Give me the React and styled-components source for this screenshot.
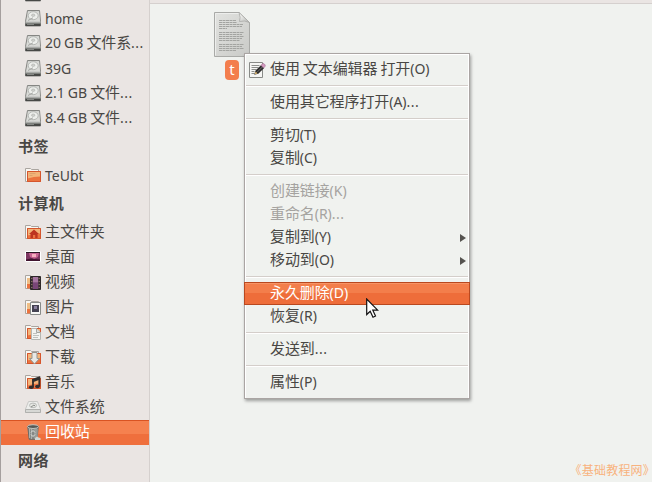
import React from "react";
import styled, { createGlobalStyle, css } from "styled-components";

const Global = createGlobalStyle`
  * { box-sizing: border-box; }
  body { margin: 0; overflow: hidden; font-family: "Noto Sans", "Noto Sans CJK SC", sans-serif; color: #494744; }
  svg { display: block; flex: none; }
`;
const Window = styled.div`
  position: relative;
  display: flex;
  width: 652px;
  height: 482px;
  overflow: hidden;
  background: #f0f2ef;
`;
const Sidebar = styled.aside`
  display: flex;
  flex-direction: column;
  width: 150px;
  flex: none;
  background: #eae5e3;
  border-left: 1px solid #a59f9e;
  border-right: 1px solid #d5d0ce;
`;
const PlaceList = styled.div`
  margin-top: -19px;
`;
const Place = styled.div`
  display: flex;
  align-items: center;
  height: 25px;
  padding-left: 24px;
  gap: 3px;
  font-size: 15px;
  white-space: nowrap;
  ${(p) => p.$active && css`
    color: #fff;
    background: linear-gradient(#f5814f 0 56%, #ef6f3d 56%);
    box-shadow: inset 0 1px #d95322;
  `}
`;
const Heading = styled.div`
  height: 32px;
  padding-left: 17px;
  font-size: 15px;
  font-weight: 700;
  letter-spacing: 0.4px;
  line-height: 31px;
  white-space: nowrap;
`;
const TextLine = styled.span`
  display: block;
  height: 23px;
  line-height: 23px;
  margin-top: ${(p) => (p.$lift ? "-2px" : 0)};
  font-size: 15px;
  letter-spacing: -0.1px;
  white-space: pre;
`;
const Latin = styled.span`
  font-size: 14px;
  letter-spacing: ${(p) => (p.$dots ? "0.5px" : "0")};
  word-spacing: -0.6px;
`;
const Content = styled.main`
  flex: 1;
  border-top: 3px solid #eae5e3;
  box-shadow: inset 0 1px #d5d0ce;
`;
const FileItem = styled.div`
  display: flex;
  flex-direction: column;
  align-items: center;
  width: 36px;
  margin: 9px 0 0 64px;
  gap: 3px;
`;
const FileName = styled.div`
  width: 14px;
  height: 20px;
  border-radius: 4px;
  background: #f37e4d;
  color: #fff;
  font-size: 15px;
  line-height: 19px;
  text-align: center;
`;
const Menu = styled.div`
  position: absolute;
  left: 244px;
  top: 53px;
  width: 226px;
  height: 346px;
  padding: 4px 0;
  background: #f0f2ef;
  border: 1px solid #aaa5a3;
  box-shadow: inset 1px 1px #fff, inset -1px 0 #fff, 1px 2px 3px rgba(0, 0, 0, 0.35);
`;
const MenuItem = styled.div`
  display: flex;
  align-items: center;
  height: 23px;
  padding-left: 4px;
  color: ${(p) => (p.$disabled ? "#a5a3a0" : "inherit")};
  ${(p) => p.$active && css`
    margin: 0 -1px;
    padding-left: 4px;
    color: #fff;
    border: 1px solid #b9481f;
    background: linear-gradient(#f37e4b 0 50%, #ee6d3a 50%);
    box-shadow: inset 0 1px #f79466;
  `}
`;
const IconSlot = styled.span`
  width: 21px;
  flex: none;
`;
const Arrow = styled.span`
  width: 0;
  height: 0;
  margin-left: auto;
  margin-right: 3px;
  border-left: 6px solid #555350;
  border-top: 4px solid transparent;
  border-bottom: 4px solid transparent;
`;
const Separator = styled.div`
  height: 2px;
  margin: 4px 1px;
  background: linear-gradient(#d4ceca 0 50%, #fff 50%);
`;
const Pointer = styled.svg`
  position: absolute;
  left: 366px;
  top: 298px;
`;
const Watermark = styled.div`
  position: absolute;
  right: 3px;
  bottom: 3px;
  color: #f8b27e;
  font: 12px/18px "Noto Sans CJK SC", sans-serif;
  font-feature-settings: "halt";
  letter-spacing: 0.2px;
  white-space: nowrap;
`;

function Label({ text }) {
  return (
    <TextLine $lift={/[^\x20-\x7e]/.test(text)}>
      {text.split(/(\.\.\.|[\x20-\x2d\x2f-\x7e]+)/).filter(Boolean).map((part, i) =>
        /^[\x20-\x7e]/.test(part) ? <Latin key={i} $dots={part === "..."}>{part}</Latin> : part
      )}
    </TextLine>
  );
}

const PlaceIcon = ({ children }) => (
  <svg width="17" height="17" viewBox="0 0 17 17">{children}</svg>
);

const Drive = () => (
  <PlaceIcon>
    <path d="M2.5.5h12l1 11v4.5H.5v-4.5z" fill="#bdbfbc" stroke="#858683" />
    <path d="M3 1.2h11l1 10.3H1.3z" fill="#d9dad7" />
    <ellipse cx="8.2" cy="5.7" rx="5" ry="4" fill="#eceeeb" stroke="#b4b6b3" />
    <ellipse cx="8.2" cy="5.2" rx="1.7" ry="1.2" fill="#d1d3d0" stroke="#a4a6a3" strokeWidth=".5" />
    <path d="M3 10.5l5-2.7" stroke="#a3a5a2" />
    <path d="M.5 12h15v1.5H.5z" fill="#a9aba8" />
    <path d="M.5 13.5h15V16H.5z" fill="#474846" />
    <path d="M2 14.5h7" stroke="#858784" />
  </PlaceIcon>
);
const FolderBase = ({ open }) => (
  <>
    <path d="M.5 14.5v-13h5l1 1h7v12z" fill="#f8f6f2" stroke="#aaa5a0" />
    <path d={open ? "M2 4h14v11H2z" : "M2 4h4v10.5H2z"} fill="#eb733f" />
    {open && <path d="M2.5 4.5h13v5q-7 .2-13 2z" fill="#f3b378" />}
    {open && <path d="M2.5 4.5h13v10h-13z" fill="none" stroke="#d5552c" />}
    {!open && <path d="M2 4h3v6H2z" fill="#efbd85" />}
  </>
);
const Folder = () => (
  <PlaceIcon><FolderBase open /><path d="M4.5 6.5h6M4.5 8.5h3" stroke="#d69c69" strokeWidth=".8" /></PlaceIcon>
);
const HomeFolder = () => (
  <PlaceIcon><FolderBase open /><path d="M4 10l5-4.5 5 4.5h-1.4v4h-2.4v-3H8v3H5.5v-4z" fill="#bd3420" /></PlaceIcon>
);
const Desktop = () => (
  <PlaceIcon>
    <path d="M.5 2.5h15v10H.5z" fill="#7c3560" stroke="#fff" />
    <path d="M1 3h14v1H1z" fill="#2c1724" />
    <path d="M4 4h10l-1 4-4 2-4-2z" fill="#c86493" />
    <path d="M7 5h4v3H7z" fill="#f7b0c0" />
    <path d="M1 10.5l5-1 9 1V12H1z" fill="#41142f" />
  </PlaceIcon>
);
const Videos = () => (
  <PlaceIcon>
    <FolderBase />
    <path d="M5.5 2.5h10v13h-10z" fill="#865683" stroke="#2d2828" />
    <path d="M8 3h5v5H8z" fill="#a675a0" /><path d="M8 9h5v6H8z" fill="#794677" />
    <path d="M6.8 3v12M14.2 3v12" stroke="#382e30" strokeWidth="2" />
    <path d="M6.8 4v11M14.2 4v11" stroke="#a68975" strokeWidth="1" strokeDasharray="1 2" />
  </PlaceIcon>
);
const Pictures = () => (
  <PlaceIcon>
    <FolderBase />
    <path d="M5.5 3.5h10v12h-10z" fill="#f7f7f5" stroke="#888b89" />
    <path d="M7 6h7v7H7z" fill="#444252" /><path d="M9 7h3v3H9z" fill="#8b82a0" />
  </PlaceIcon>
);
const Documents = () => (
  <PlaceIcon>
    <FolderBase open /><path d="M6.5 4.5h5l4 4v7h-9z" fill="#f3f4f1" stroke="#b5b6b2" />
    <path d="M11.5 4.5v4h4" fill="#dedfdc" stroke="#a5a6a2" />
    <path d="M8 9.5h4M8 11.5h6M8 13.5h5" stroke="#c0c2be" />
  </PlaceIcon>
);
const Downloads = () => (
  <PlaceIcon>
    <FolderBase open />
    <path d="M7 3.5h5v6h2.5L9.5 15l-5-5.5H7z" fill="#e7e8e5" stroke="#95958f" />
  </PlaceIcon>
);
const Music = () => (
  <PlaceIcon>
    <FolderBase open />
    <path d="M8 5v8M14.3 3v9.5" fill="none" stroke="#302e2d" strokeWidth="1.8" />
    <path d="M7.2 5l8-3v3.5l-8 3z" fill="#302e2d" />
    <ellipse cx="6.3" cy="13.3" rx="2.4" ry="1.8" fill="#302e2d" />
    <ellipse cx="12.5" cy="12.5" rx="2.4" ry="1.8" fill="#302e2d" />
  </PlaceIcon>
);
const FileSystem = () => (
  <PlaceIcon>
    <path d="M3.5 2.5h9l3 7.5v3.5H.5V10z" fill="#ecedeb" stroke="#c8c9c6" />
    <path d="M.5 10.5h15v3H.5z" fill="#d7d8d5" stroke="#b0b1ae" />
    <ellipse cx="8" cy="6.4" rx="3.5" ry="2.3" fill="#e4e6e2" stroke="#b9bbb8" />
    <path d="M6 8l3-2 1 1" fill="none" stroke="#8b8d89" />
  </PlaceIcon>
);
const Trash = () => (
  <PlaceIcon>
    <path d="M2.8 3h10.4L12 15.3H4.2z" fill="#858885" stroke="#696c69" />
    <path d="M4.5 5v9M6.5 5v10M10 5v10M12 5v8" stroke="#b6bab6" strokeWidth=".8" />
    <ellipse cx="8" cy="2.6" rx="5.5" ry="1.9" fill="#555855" stroke="#c1c5c1" />
    <path d="M6 8.5l2-2 2 2M6 10.5l2 2 2-2" fill="none" stroke="#e0e3df" />
    <path d="M10 16v-2l2-1.5 1.5 1 2 .5v2z" fill="#d3d6d2" />
  </PlaceIcon>
);
const EditorIcon = () => (
  <svg width="17" height="17" viewBox="0 0 17 17">
    <path d="M.5 1.5h13v15H.5z" fill="#f6f6f4" stroke="#888a87" />
    <path d="M2.5 4.5h8M2.5 6.5h7M2.5 8.5h5M2.5 10.5h3M2.5 12.5h3" stroke="#8c8e8b" />
    <path d="M5.2 13.8l1.2-4L12.2 4l3 3-5.9 5.7z" fill="#2d2d2d" />
    <path d="M5.8 13.2l.8-2.7 2 2z" fill="#e5bc74" />
    <path d="M8.3 11l5-5" stroke="#686868" />
    <path d="M12 4.3l1.5-1.5q1.5-.8 2.5 1t-.8 2.3L14.5 7z" fill="#d59bc0" stroke="#9d6990" strokeWidth=".6" />
  </svg>
);
const FileIcon = () => (
  <svg width="36" height="45" viewBox="0 0 36 45">
    <defs>
      <linearGradient id="paper" x2="1" y2="1">
        <stop stopColor="#e2e3e0" /><stop offset="1" stopColor="#c9cac7" />
      </linearGradient>
      <linearGradient id="fold" x2="1" y2="1" x1=".3" y1="0">
        <stop stopColor="#fafbf9" /><stop offset="1" stopColor="#b4b5b2" />
      </linearGradient>
    </defs>
    <path d="M.5.5H25l10.5 10v34H.5z" fill="url(#paper)" stroke="#a9aaa7" />
    <path d="M1.5 43.5V1.5H25" fill="none" stroke="#edeeec" />
    <path d="M25 .5q2 5 .5 9 5-1.5 10 1z" fill="url(#fold)" stroke="#a9aaa7" strokeWidth=".8" />
    <path d="M5 8.5h17M5 10.5h18M5 12.5h24M5 14.5h23M5 16.5h8M5 20.5h25M5 22.5h23M5 24.5h25M5 26.5h23M5 28.5h21M5 32.5h25M5 34.5h23M5 36.5h25M5 38.5h17" stroke="#a3a4a1" strokeDasharray="3 .5" />
  </svg>
);

const drives = ["", "home", "20 GB 文件系...", "39G", "2.1 GB 文件...", "8.4 GB 文件..."];
const places = [
  ["主文件夹", HomeFolder], ["桌面", Desktop], ["视频", Videos], ["图片", Pictures],
  ["文档", Documents], ["下载", Downloads], ["音乐", Music], ["文件系统", FileSystem], ["回收站", Trash],
];
const menu = [
  { text: "使用 文本编辑器 打开(O)", icon: true }, null,
  { text: "使用其它程序打开(A)..." }, null,
  { text: "剪切(T)" }, { text: "复制(C)" }, null,
  { text: "创建链接(K)", disabled: true }, { text: "重命名(R)...", disabled: true },
  { text: "复制到(Y)", sub: true }, { text: "移动到(O)", sub: true }, null,
  { text: "永久删除(D)", active: true }, { text: "恢复(R)" }, null,
  { text: "发送到..." }, null, { text: "属性(P)" },
];

export default function App() {
  return (
    <Window>
      <Global />
      <Sidebar>
        <PlaceList>
          {drives.map((d, i) => <Place key={i}><Drive /><Label text={d} /></Place>)}
          <Heading>书签</Heading>
          <Place><Folder /><Label text="TeUbt" /></Place>
          <Heading>计算机</Heading>
          {places.map(([name, Icon]) => (
            <Place key={name} $active={name === "回收站"}><Icon /><Label text={name} /></Place>
          ))}
          <Heading>网络</Heading>
        </PlaceList>
      </Sidebar>
      <Content>
        <FileItem><FileIcon /><FileName>t</FileName></FileItem>
      </Content>
      <Menu>
        {menu.map((m, i) => m ? (
          <MenuItem key={i} $active={m.active} $disabled={m.disabled}>
            <IconSlot>{m.icon && <EditorIcon />}</IconSlot>
            <Label text={m.text} />
            {m.sub && <Arrow />}
          </MenuItem>
        ) : <Separator key={i} />)}
      </Menu>
      <Pointer width="13" height="21" viewBox="0 0 13 21">
        <path d="M.7 1v15.5l3.5-3.3 2.8 6 2.5-1.2-2.7-5.8h4.9z" fill="#fff" stroke="#111" strokeWidth="1.2" />
      </Pointer>
      <Watermark>《基础教程网》</Watermark>
    </Window>
  );
}
